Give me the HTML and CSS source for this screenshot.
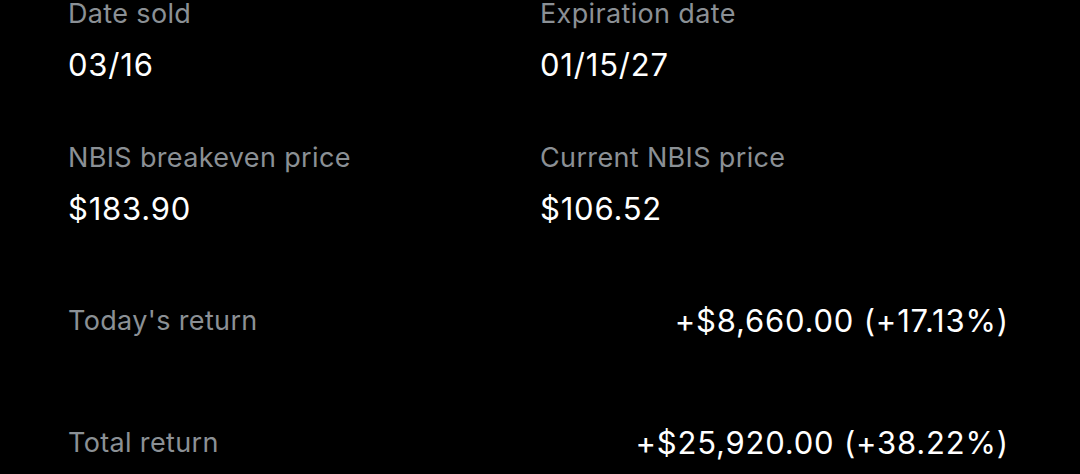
FILE: index.html
```html
<!DOCTYPE html>
<html lang="en">
<head>
  <meta charset="UTF-8">
  <meta name="viewport" content="width=device-width, initial-scale=1.0">
  <title>NBIS option details</title>
  <link rel="stylesheet" href="styles.css">
</head>
<body>
  <div id="details">
    <div class="stats">
      <div class="stat">
        <div class="label">Date sold</div>
        <div class="value">03/16</div>
      </div>
      <div class="stat">
        <div class="label">Expiration date</div>
        <div class="value">01/15/27</div>
      </div>
      <div class="stat">
        <div class="label">NBIS breakeven price</div>
        <div class="value">$183.90</div>
      </div>
      <div class="stat">
        <div class="label">Current NBIS price</div>
        <div class="value">$106.52</div>
      </div>
    </div>
    <div class="return-row today">
      <span class="label">Today's return</span>
      <span class="value">+$8,660.00 (+17.13%)</span>
    </div>
    <div class="return-row total">
      <span class="label">Total return</span>
      <span class="value">+$25,920.00 (+38.22%)</span>
    </div>
  </div>
</body>
</html>
```

FILE: styles.css
```css
body, html {
  margin: 0;
  padding: 0;
  background: #000;
  font-family: Inter, 'Noto Sans', sans-serif;
  overflow: hidden;
}
#details {
  padding: 0 72px 0 68px;
}
.stats {
  display: grid;
  grid-template-columns: 472px 1fr;
  row-gap: 61px;
}
.stat {
  display: flex;
  flex-direction: column;
  gap: 19px;
}
.label {
  font-size: 27px;
  line-height: 28px;
  letter-spacing: 0.35px;
  color: #8b9095;
}
.value {
  font-size: 31px;
  line-height: 36px;
  letter-spacing: 0.8px;
  color: #fff;
}
.return-row {
  display: flex;
  justify-content: space-between;
  align-items: center;
}
.return-row .value {
  margin-right: -0.8px;
}
.return-row.today {
  margin-top: 76px;
}
.return-row.total {
  margin-top: 86px;
}
```
